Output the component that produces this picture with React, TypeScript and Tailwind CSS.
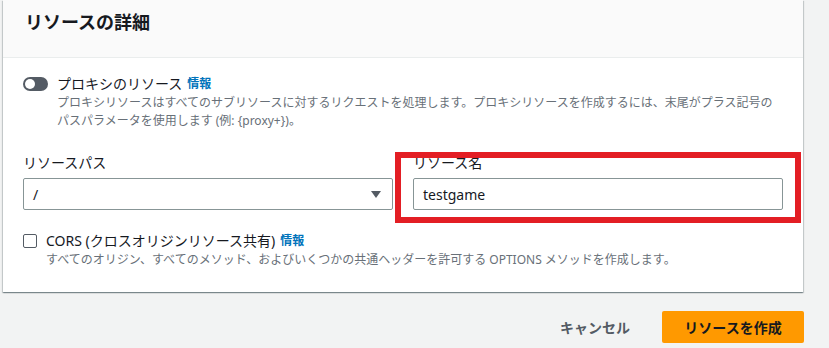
import React from "react";

const font = { fontFamily: '"Noto Sans", "Noto Sans CJK JP", sans-serif' };

const Toggle = () => (
  <div className="w-[25px] h-[14px] rounded-full bg-[#545b64] flex items-center px-[2px] shrink-0">
    <div className="w-[10px] h-[10px] rounded-full bg-white" />
  </div>
);

const App = () => {
  return (
    <div
      className="w-[829px] h-[348px] bg-[#f2f3f3] overflow-hidden text-[#16191f]"
      style={font}
    >
      <div className="relative ml-[3px] w-[800px] bg-white shadow-[0_1px_1px_0_rgba(0,28,36,0.3),1px_1px_1px_0_rgba(0,28,36,0.15),-1px_1px_1px_0_rgba(0,28,36,0.15)]">
        <div className="h-[58px] bg-[#fafafa] border-b border-[#eaeded] px-[22px] pt-[9px]">
          <h2 className="text-[18px] leading-[26px] font-bold">リソースの詳細</h2>
        </div>

        <div className="px-[20px] pt-[16px] pb-[23px]">
          {/* proxy toggle */}
          <div className="flex items-start gap-[9px]">
            <div className="h-[20px] flex items-center">
              <Toggle />
            </div>
            <div>
              <div className="flex items-center h-[20px] text-[14px] leading-[20px]">
                <span>プロキシのリソース</span>
                <a className="ml-[5px] text-[12px] font-bold text-[#0073bb]">情報</a>
              </div>
              <p className="text-[12px] leading-[18px] text-[#687078]">
                プロキシリソースはすべてのサブリソースに対するリクエストを処理します。プロキシリソースを作成するには、末尾がプラス記号の
                <br />
                パスパラメータを使用します (例: {"{proxy+}"})。
              </p>
            </div>
          </div>

          {/* path / name */}
          <div className="grid grid-cols-2 gap-[20px] mt-[23px]">
            <div>
              <label className="block text-[14px] leading-[20px] mb-[5px]">リソースパス</label>
              <div className="h-[32px] border border-[#879596] rounded-[2px] flex items-center justify-between pl-[9px] pr-[11px] text-[14px]">
                <span>/</span>
                <svg width="10" height="7" viewBox="0 0 10 7">
                  <path d="M0 0h10L5 7z" fill="#545b64" />
                </svg>
              </div>
            </div>
            <div>
              <label className="block text-[14px] leading-[20px] mb-[5px]">リソース名</label>
              <div className="h-[32px] border border-[#879596] rounded-[2px] flex items-center px-[9px] text-[14px]">
                testgame
              </div>
            </div>
          </div>

          {/* CORS */}
          <div className="flex items-start gap-[9px] mt-[21px]">
            <div className="h-[20px] flex items-center">
              <div className="w-[14px] h-[14px] border border-[#545b64] rounded-[2px]" />
            </div>
            <div>
              <div className="flex items-center h-[20px] text-[14px] leading-[20px]">
                <span>CORS (クロスオリジンリソース共有)</span>
                <a className="ml-[5px] text-[12px] font-bold text-[#0073bb]">情報</a>
              </div>
              <p className="text-[12px] leading-[18px] text-[#687078]">
                すべてのオリジン、すべてのメソッド、およびいくつかの共通ヘッダーを許可する OPTIONS メソッドを作成します。
              </p>
            </div>
          </div>
        </div>

        {/* highlight */}
        <div className="absolute left-[392px] top-[152px] w-[406px] h-[71px] border-[6px] border-[#e31e24]" />
      </div>

      <div className="ml-[3px] w-[801px] mt-[19px] flex justify-end items-center gap-[32px]">
        <button className="text-[14px] font-bold text-[#545b64]">キャンセル</button>
        <button className="w-[142px] h-[32px] rounded-[2px] bg-[#ff9900] text-[14px] font-bold text-[#16191f]">
          リソースを作成
        </button>
      </div>
    </div>
  );
};

export default App;
